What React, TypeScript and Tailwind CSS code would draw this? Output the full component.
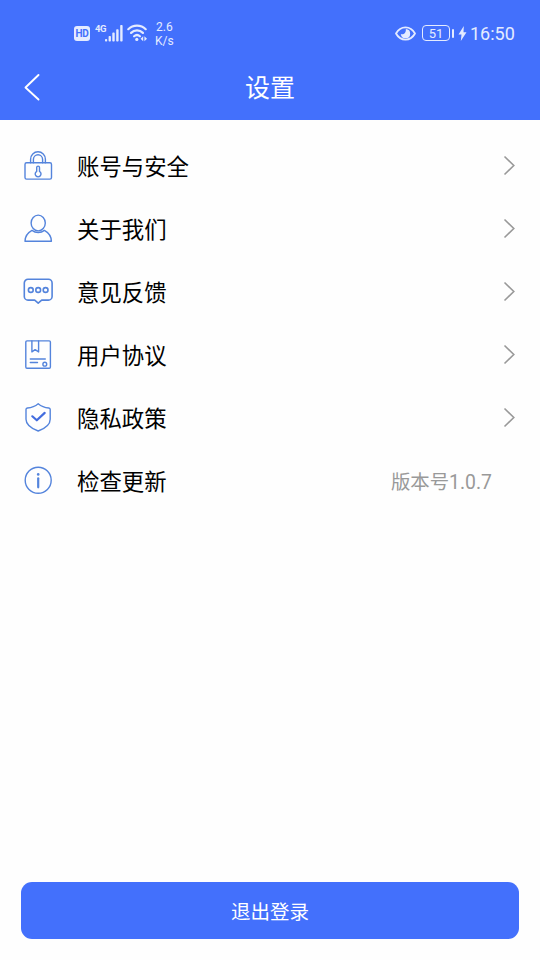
import type { ReactNode } from 'react';

const line = { fill: 'none', strokeLinecap: 'round', strokeLinejoin: 'round' } as const;

function RowIcon({ children }: { children: ReactNode }) {
  return (
    <svg className="h-[31px] w-[30px] shrink-0 stroke-[#5484dc]" viewBox="0 0 30 31" strokeWidth="1.4" {...line}>
      {children}
    </svg>
  );
}

const LockIcon = (
  <RowIcon>
    <rect x="2" y="12.8" width="26.5" height="16.3" rx="1.6" />
    <path d="M7.6 12.8V9.2a7.4 7.4 0 0 1 14.8 0v3.6M10.4 12.8V9.4a4.6 4.6 0 0 1 9.2 0v3.4" />
    <path d="M13.7 21.4v-3.9a1.4 1.4 0 0 1 2.8 0v3.9a2.9 2.9 0 1 1-2.8 0z" strokeWidth="1.4" />
  </RowIcon>
);
const UserIcon = (
  <RowIcon>
    <ellipse cx="15.2" cy="10" rx="7.1" ry="7.9" />
    <path d="M9 17.4C5 19.6 2.1 23.5 2 28.2h26.4c-.1-4.7-3-8.6-7-10.8-3.6 2.8-8.8 2.8-12.4 0z" />
  </RowIcon>
);
const ChatIcon = (
  <RowIcon>
    <path d="M5 3.3h20.4A3.7 3.7 0 0 1 29.1 7v13.4a3.7 3.7 0 0 1-3.7 3.7h-6.7l-3.500 3-3.500-3H5a3.700 3.700 0 0 1-3.700-3.700V7A3.700 3.700 0 0 1 5 3.300z" strokeWidth="1.6" />
    <g strokeWidth="1.600">
      <circle cx="7.8" cy="14" r="2.4" />
      <circle cx="15.2" cy="14" r="2.4" />
      <circle cx="22.6" cy="14" r="2.4" />
    </g>
  </RowIcon>
);
const DocIcon = (
  <RowIcon>
    <rect x="2.8" y="1.9" width="24.6" height="27.4" rx="1.2" />
    <path d="M8.9 1.9v11l3.2-2.2 3.5 2.2v-11" />
    <path d="M7.3 20h15M7.3 23.5h7.2" />
    <circle cx="21.8" cy="25.2" r="1.9" />
  </RowIcon>
);
const ShieldIcon = (
  <RowIcon>
    <path d="M15.2 1.8c3.2 2.8 7 4 10.6 4.2.9.1 1.4.6 1.4 1.5v9.7c0 5.6-5.6 9.4-12 11.8C8.8 26.6 3 22.8 3 17.2V7.500c0-.9.5-1.400 1.400-1.500 3.800-.2 7.600-1.400 10.800-4.200z" />
    <path d="m9.3 14.3 4.500 4 7.900-7.400" strokeWidth="2.200" className="stroke-[#426cde]" />
  </RowIcon>
);
const InfoIcon = (
  <RowIcon>
    <circle cx="15.2" cy="15.3" r="13" />
    <path d="M15.2 13.3v9" strokeWidth="2.2" />
    <path d="M15.2 9.4v.1" strokeWidth="2.6" />
  </RowIcon>
);

const rows = [
  { label: '账号与安全', icon: LockIcon },
  { label: '关于我们', icon: UserIcon },
  { label: '意见反馈', icon: ChatIcon },
  { label: '用户协议', icon: DocIcon },
  { label: '隐私政策', icon: ShieldIcon },
  { label: '检查更新', icon: InfoIcon, value: '版本号1.0.7' },
];

function StatusBar() {
  return (
    <div className="flex h-[54px] items-center pt-3 pr-[25px] pl-[74px] font-[Roboto,sans-serif] text-[#e4ebff]">
      <div className="flex h-[15px] w-4 items-center justify-center rounded-[3px] bg-[#e4ebff] pt-px text-[10px] leading-none font-bold tracking-tight text-[#4370fc]">
        HD
      </div>
      <span className="mb-[9px] ml-[5px] w-[10px] text-[9.5px] leading-[10px] font-bold tracking-tighter">4G</span>
      <svg className="h-[17px] w-[18px]" viewBox="0 0 18 17" fill="currentColor">
        <rect x="0" y="14" width="2.2" height="2.6" rx=".8" />
        <rect x="3.6" y="11" width="2.3" height="5.6" rx=".8" />
        <rect x="7.3" y="7.6" width="2.4" height="9" rx=".8" />
        <rect x="11.2" y="4.2" width="2.4" height="12.4" rx=".8" />
        <rect x="15.2" y="0" width="2.4" height="16.6" rx=".8" />
      </svg>
      <svg className="ml-[4px] h-[18px] w-[21px]" viewBox="0 0 21 18" stroke="currentColor" strokeWidth="2.2" {...line}>
        <path d="M1.3 5.2c4.8-4.8 12.6-4.8 17.4 0M4.1 8.9c3.3-3.3 8.5-3.3 11.8 0M7.1 12.3c1.7-1.5 4.1-1.5 5.8 0" />
        <circle cx="9.8" cy="15.4" r="1.6" fill="currentColor" stroke="none" />
        <path d="m16.2 12.200-2.600 2.500 2.600 2.500zM17.400 12.200l2.600 2.500-2.600 2.500z" fill="currentColor" stroke="none" />
      </svg>
      <div className="ml-[7px] pt-px text-[12px] leading-[14px]">
        <div className="pl-px">2.6</div>
        <div>K/s</div>
      </div>
      <svg className="ml-auto h-[15px] w-[21px]" viewBox="0 0 21 15" stroke="currentColor" strokeWidth="1.8" {...line}>
        <path d="M1 7.5C5.5-.6 15.5-.6 20 7.5c-4.5 8.1-14.5 8.1-19 0z" />
        <path d="M10.800 2.900a4.700 4.700 0 1 1-5 5.200c3 .9 5.500-1.500 5-5.200z" fill="currentColor" stroke="none" />
      </svg>
      <div className="ml-[6px] flex h-4 w-[28px] items-center justify-center rounded-[4px] border-[1.5px] border-[#e4ebff] text-[13px] leading-none">
        51
      </div>
      <div className="ml-[2px] h-[9px] w-[2px] rounded-sm bg-[#e4ebff]" />
      <svg className="ml-[4px] h-[15px] w-[9px]" viewBox="0 0 9 15" fill="currentColor">
        <path d="M5.8 0 .5 8.4h3L2.8 15 8.5 6.2h-3z" />
      </svg>
      <span className="ml-[3px] w-[45px] pt-[2px] text-[18px] leading-none whitespace-nowrap">16:50</span>
    </div>
  );
}

export default function App() {
  return (
    <div className="flex h-[960px] w-[540px] flex-col bg-[#fefefe] font-[Roboto,'Noto_Sans_CJK_SC',sans-serif]">
      <header className="h-[120px] bg-[#4370fc]">
        <StatusBar />
        <div className="grid h-[66px] grid-cols-[60px_1fr_60px] items-center text-white">
          <svg className="ml-6 h-7 w-4" viewBox="0 0 16 28" stroke="currentColor" strokeWidth="1.9" {...line}>
            <path d="M14.5 2 1.5 14.5l13 12" />
          </svg>
          <h1 className="pb-[2px] text-center font-['Noto_Sans_CJK_SC',sans-serif] text-[25px] leading-none">设置</h1>
        </div>
      </header>
      <main className="flex-1 pt-[14px]">
        {rows.map((row) => (
          <div key={row.label} className="flex h-[63px] items-center pr-[25px] pl-[23px]">
            {row.icon}
            <span className="ml-6 font-['Noto_Sans_CJK_SC',sans-serif] text-[22.4px] leading-none text-black">{row.label}</span>
            {row.value ? (
              <span className="mr-[23px] ml-auto pt-1 text-[19.4px] leading-none text-[#999]">{row.value}</span>
            ) : (
              <svg className="ml-auto h-[21px] w-3 stroke-[#999]" viewBox="0 0 12 21" strokeWidth="1.6" fill="none">
                <path d="m1.5 1.5 9.3 9-9.3 9" />
              </svg>
            )}
          </div>
        ))}
      </main>
      <button className="mx-[21px] mb-[21px] h-[57px] rounded-[11px] bg-[#4370fc] font-['Noto_Sans_CJK_SC',sans-serif] text-[19.5px] leading-none text-white">
        退出登录
      </button>
    </div>
  );
}
